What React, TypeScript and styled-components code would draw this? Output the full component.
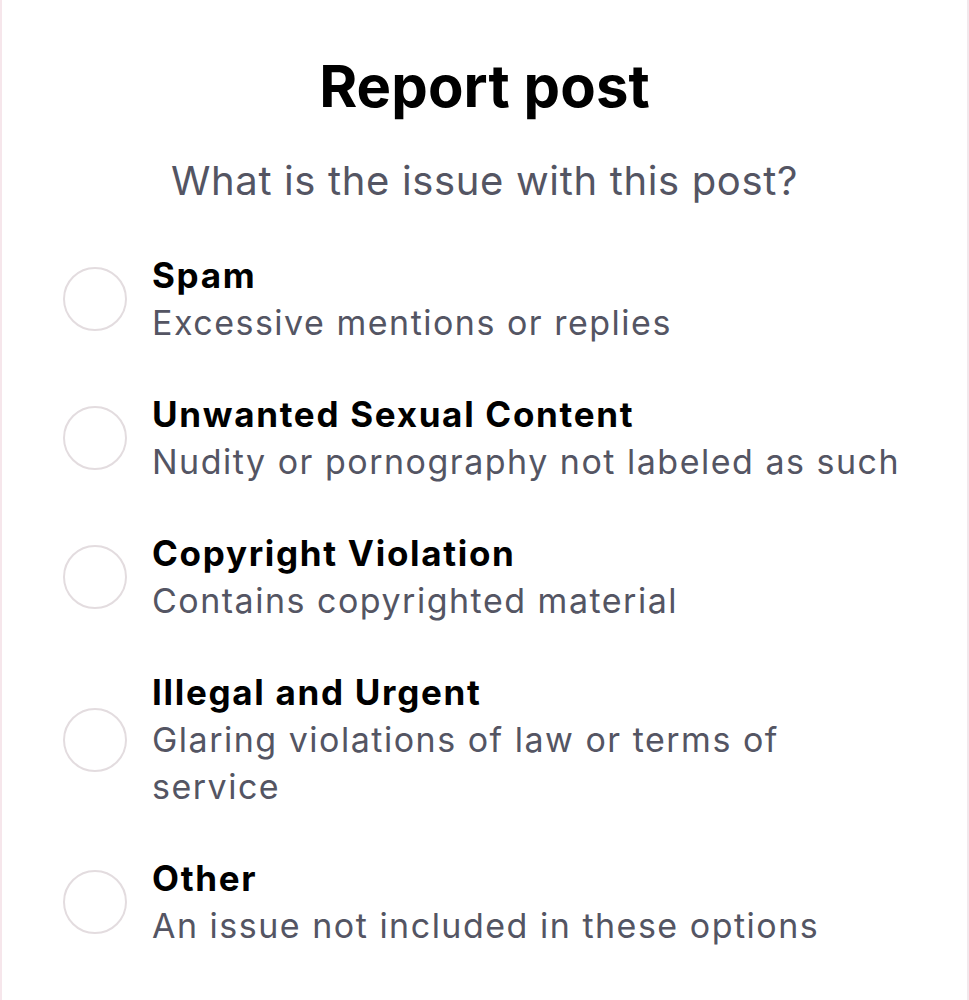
import React from "react";
import styled, { createGlobalStyle } from "styled-components";

const Global = createGlobalStyle`
  html, body { margin: 0; padding: 0; background: #ffffff; }
  body { font-family: Inter, "Noto Sans", "Liberation Sans", sans-serif; }
`;

const Sheet = styled.div`
  box-sizing: border-box;
  width: 969px;
  min-height: 1000px;
  background: #ffffff;
  border-left: 2px solid #f6e6eb;
  border-right: 2px solid #f2e8ec;
  padding: 51px 61px 0 61px;
  display: flex;
  flex-direction: column;
`;

const Title = styled.h1`
  margin: 0;
  font-size: 58px;
  line-height: 70px;
  font-weight: 700;
  color: #000000;
  text-align: center;
  letter-spacing: 0.1px;
`;

const Subtitle = styled.p`
  margin: 35px 0 0 0;
  font-size: 40px;
  line-height: 50px;
  font-weight: 400;
  color: #545563;
  text-align: center;
  letter-spacing: 0.65px;
`;

const Options = styled.div`
  margin-top: 46px;
  display: flex;
  flex-direction: column;
  gap: 45px;
`;

const Row = styled.label`
  display: flex;
  align-items: center;
  gap: 25px;
  cursor: pointer;
`;

const Radio = styled.span`
  flex: none;
  box-sizing: border-box;
  width: 64px;
  height: 64px;
  border-radius: 50%;
  border: 2px solid #e3dcdf;
  background: #ffffff;
`;

const Texts = styled.div`
  flex: 1;
  display: flex;
  flex-direction: column;
  min-width: 0;
`;

const OptionTitle = styled.div`
  font-size: 35px;
  line-height: 47px;
  font-weight: 700;
  color: #000000;
  letter-spacing: 1.7px;
`;

const OptionDesc = styled.div`
  font-size: 34px;
  line-height: 47px;
  font-weight: 400;
  color: #545563;
  letter-spacing: 1.5px;
`;

const options = [
  { title: "Spam", desc: "Excessive mentions or replies" },
  { title: "Unwanted Sexual Content", desc: "Nudity or pornography not labeled as such" },
  { title: "Copyright Violation", desc: "Contains copyrighted material" },
  { title: "Illegal and Urgent", desc: "Glaring violations of law or terms of service" },
  { title: "Other", desc: "An issue not included in these options" },
];

export default function App() {
  return (
    <>
      <Global />
      <Sheet>
        <Title>Report post</Title>
        <Subtitle>What is the issue with this post?</Subtitle>
        <Options>
          {options.map((o) => (
            <Row key={o.title}>
              <Radio />
              <Texts>
                <OptionTitle>{o.title}</OptionTitle>
                <OptionDesc>{o.desc}</OptionDesc>
              </Texts>
            </Row>
          ))}
        </Options>
      </Sheet>
    </>
  );
}
